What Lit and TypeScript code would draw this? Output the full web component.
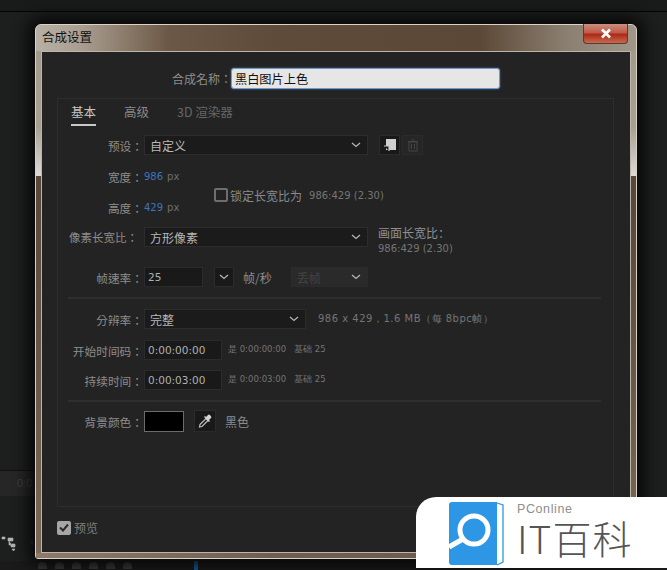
import { LitElement, html, css } from "lit";
import { customElement } from "lit/decorators.js";

const chev = html`<svg class="chev" width="10" height="6" viewBox="0 0 10 6"><path d="M1 1l4 3.5L9 1" fill="none" stroke="#b4b4b4" stroke-width="1.3"/></svg>`;

@customElement("app-root")
export class AppRoot extends LitElement {
  static styles = css`
    :host { display: block; width: 667px; height: 570px; }
    * { box-sizing: border-box; }
    .desk { position: relative; width: 667px; height: 570px; overflow: hidden; background: #1d1e1e;
      font-family: "Noto Sans CJK SC", "Noto Sans", sans-serif; font-size: 12px; color: #a8a8a8; }
    .topline { height: 12px; border-bottom: 1px solid #050505; background: #191a1a; }
    .bgpanel { position: absolute; left: 0; top: 470px; width: 35px; height: 26px; background: #262626; border-top: 1px solid #111;
      font: 11px "Liberation Sans", sans-serif; color: #3f3f3f; padding: 6px 0 0 17px; }
    .bgicons { position: absolute; left: 0; top: 535px; }
    .bgstrip { position: absolute; left: 0; top: 561px; width: 667px; height: 9px; background: #1a1a1a; display: flex; align-items: center; }
    .bgstrip i { display: block; width: 9px; height: 7px; border-radius: 5px 5px 0 0; background: #3c3c3c; margin-left: 8px; }
    .bgstrip b { display: block; width: 4px; height: 9px; background: #1f5d9c; margin-left: 62px; }
    .win { position: absolute; left: 35px; top: 24px; width: 602px; height: 535px; border-radius: 6px 6px 3px 3px;
      background: linear-gradient(90deg, #b8b0a4 0, #a89c8e 8%, #6c5846 22%, #5f4b39 40%, #5c4836 74%, #8a7e70 88%, #a09789 100%);
      box-shadow: 0 0 16px 6px #060606; border: 1px solid #d8d3ca; padding: 0 5px 5px 5px; display: flex; flex-direction: column; }
    .edge { position: absolute; width: 5px; top: 26px; height: 125px; background: linear-gradient(180deg, #a49a8c 0, #a89e92 60%, #dcdad6 100%); }
    .edgelow { position: absolute; width: 5px; top: 151px; bottom: 0; background: linear-gradient(180deg, #57473a, #7b6858); }
    .edge.l, .edgelow.l { left: 0; } .edge.r, .edgelow.r { right: 0; }
    .edgeb { position: absolute; left: 0; right: 0; bottom: 0; height: 5px; background: linear-gradient(90deg, #8d7b6a, #6f5e50 40%, #6c5b4c); }
    .titlebar { height: 26px; flex: none; display: flex; align-items: center; color: #111; font-size: 12.5px; padding: 0 0 3px 1px; position: relative; }
    .close { position: absolute; right: 8px; top: -1px; width: 45px; height: 20px; border: 1px solid #5a3a32; border-top: none;
      border-radius: 0 0 4px 4px; background: linear-gradient(180deg, #c98f80 0, #c25a48 45%, #ad2a18 55%, #c66a50 100%);
      display: flex; align-items: center; justify-content: center; }
    .client { position: relative; flex: 1; background: #232323; border: 1px solid #bdb5a9; padding: 0 16px 0 15px; display: flex; flex-direction: column; }
    .namerow { display: flex; align-items: center; height: 21px; margin-top: 16px; margin-left: 115px; }
    .namerow label { width: 59px; color: #8e8e8e; white-space: nowrap; font-family: "Noto Sans CJK TC", sans-serif; }
    .nameinput { width: 269px; height: 21px; background: #e6e6e6; border: 1px solid #6f9ac8; border-radius: 3px; color: #111;
      font-size: 12.2px; padding-left: 3px; display: flex; align-items: center; box-shadow: 0 0 2px #4c7fb5; }
    .panel { margin-top: 9px; height: 409px; border: 1px solid #2d2d2d; padding: 0 10px; display: flex; flex-direction: column; position: relative; }
    .tabs { display: flex; height: 26px; margin-top: 3px; flex: none; }
    .tab { color: #8a8a8a; font-size: 12.5px; margin-left: 28px; height: 24px; }
    .tab.on { color: #c4c4c4; margin-left: 3px; border-bottom: 2px solid #c8c8c8; width: 25px; }
    .tab.off { color: #666; }
    .row { display: flex; align-items: center; flex: none; position: relative; }
    .mt7 { margin-top: 7px; } .mt4 { margin-top: 4px; } .mt20 { margin-top: 20px; } .mt10 { margin-top: 10px; } .mt11 { margin-top: 11px; } .mt8 { margin-top: 8px; }
    .lab { width: 75px; text-align: right; color: #8c8c8c; flex: none; margin-right: 1px; font-size: 11.7px; white-space: nowrap;
      font-family: "Noto Sans CJK TC", sans-serif; }
    .lab.tight { font-size: 11.5px; padding-right: 5px; }
    .sel { height: 20px; background: #1b1b1b; border: 1px solid #2c2c2c; color: #b8b8b8; font-size: 12px; padding: 0 6px 0 5px;
      display: flex; align-items: center; justify-content: space-between; flex: none; }
    .preset { width: 224px; }
    .res { width: 162px; }
    .drop { width: 77px; margin-left: 19px; background: #2a2a2a; border-color: #2b2b2b; color: #434343; }
    .input { height: 20px; background: #191919; border: 1px solid #2b2b2b; color: #b0b0b0; display: flex; align-items: center; padding-left: 3px;
      font: 10.5px "DejaVu Sans", sans-serif; flex: none; }
    .tc { width: 78px; }
    .fps { width: 59px; }
    .ibtn { width: 21px; height: 20px; display: flex; align-items: center; justify-content: center; flex: none; }
    .ibtn.dark { background: #191919; border: 1px solid #2b2b2b; }
    .ibtn.dim { border: 1px solid #2b2b2b; background: #262626; margin-left: 2px; }
    .ibtn.narrow { width: 20px; margin-left: 11px; }
    .ibtn.tall { width: 22px; height: 22px; margin-left: 10px; }
    .ml11 { margin-left: 11px; }
    .sm { font: 10px "DejaVu Sans", sans-serif; color: #757575; white-space: nowrap; }
    .sm.wide { letter-spacing: .5px; margin-left: 12px; }
    .sm.lockv { margin-left: 7px; }
    .tiny { font: 8.5px "DejaVu Sans", sans-serif; color: #757575; white-space: nowrap; margin-left: 6px; }
    .tiny + .tiny { margin-left: 8px; }
    .blue { color: #3b75c0; font: 10px "DejaVu Sans", sans-serif; }
    .px { color: #6e6e6e; font: 10px "DejaVu Sans", sans-serif; margin-left: 4px; }
    .check { width: 14px; height: 14px; border: 2px solid #6e6e6e; border-radius: 2px; flex: none; }
    .widthblock { display: flex; height: 62px; margin-top: 6px; }
    .dims { width: 146px; display: flex; flex-direction: column; }
    .dims .row { height: 31px; }
    .lock { display: flex; align-items: center; color: #8a8a8a; font-size: 12px; padding-top: 6px; }
    .lock .check { margin-right: 2px; }
    .info { position: absolute; left: 310px; top: -1px; display: flex; flex-direction: column; gap: 3px; line-height: 14px; white-space: nowrap; }
    .infohead { font-size: 12px; color: #909090; }
    .unit { margin-left: 9px; color: #8c8c8c; font-size: 12px; }
    .rule { height: 2px; background: #2e2e2e; flex: none; margin-right: 2px; }
    .swatch { width: 40px; height: 21px; background: #000; border: 1px solid #6c6c6c; flex: none; }
    .footer { position: absolute; left: 15px; bottom: 16px; display: flex; align-items: center; gap: 3px; color: #7e7e7e; font-size: 12px; }
    .pcheck { width: 14px; height: 14px; background: #a6a6a6; border-radius: 2px; display: flex; align-items: center; justify-content: center; }
    .logo { position: absolute; left: 416px; top: 497px; width: 251px; height: 71px; background: #fff; border-radius: 20px 0 0 0; }
    .logo svg { position: absolute; left: 33px; top: 5px; }
    .logotext { position: absolute; left: 101px; top: 5px; display: flex; flex-direction: column; }
    .pc { font: 12.5px/14px "Liberation Sans", sans-serif; color: #8d8d8d; letter-spacing: .6px; }
    .it { font: 300 39px/40px "Noto Sans CJK SC", sans-serif; color: #555; white-space: nowrap; letter-spacing: 1px; margin-top: 1px; }
  `;

  render() {
    return html`<div class="desk">
      <div class="topline"></div>
      <div class="bgpanel">0:0</div>
      <svg class="bgicons" width="36" height="18" viewBox="0 0 36 18"><path d="M2 2h3v2H2zM8 3h5v3H8zM9 6v4h3M11 9h4v3h-4zM12 14h3l-1.500 2z" fill="#b4b4b4" stroke="#b4b4b4" stroke-width=".6"/><path d="M33 4v7l-3-3.500z" fill="#3a3a3a"/></svg>
      <div class="bgstrip"><i style="margin-left:38px"></i><i></i><i></i><i></i><i></i><i></i><b></b></div>
      <div class="win">
        <div class="edge l"></div><div class="edge r"></div>
        <div class="edgelow l"></div><div class="edgelow r"></div>
        <div class="edgeb"></div>
        <div class="titlebar">合成设置</div>
        <div class="close"><svg width="12" height="11" viewBox="0 0 12 11"><path d="M2 1.500l8 8M10 1.500l-8 8" stroke="#fff" stroke-width="2.600"/></svg></div>
        <div class="client">
          <div class="namerow"><label>合成名称：</label><div class="nameinput">黑白图片上色</div></div>
          <div class="panel">
            <div class="tabs"><div class="tab on">基本</div><div class="tab">高级</div><div class="tab off">3D 渲染器</div></div>
            <div class="row mt7">
              <div class="lab">预设：</div>
              <div class="sel preset">自定义${chev}</div>
              <div class="ibtn dark ml11"><svg width="14" height="14" viewBox="0 0 14 14"><path d="M3 1h10v11H3z" fill="#d0d0d0"/><path d="M1 8h5v5" fill="#191919" stroke="#c8c8c8" stroke-width="1.200"/></svg></div>
              <div class="ibtn dim"><svg width="12" height="13" viewBox="0 0 12 13"><path d="M2 3h8v9H2zM1 2.500h10M4.500 1h3M4.500 5v5M7.500 5v5" fill="none" stroke="#444"/></svg></div>
            </div>
            <div class="widthblock">
              <div class="dims">
                <div class="row"><div class="lab">宽度：</div><span class="blue">986</span><span class="px">px</span></div>
                <div class="row"><div class="lab">高度：</div><span class="blue">429</span><span class="px">px</span></div>
              </div>
              <div class="lock"><div class="check"></div>锁定长宽比为<span class="sm lockv">986:429 (2.30)</span></div>
            </div>
            <div class="row mt4">
              <div class="lab tight">像素长宽比：</div>
              <div class="sel preset">方形像素${chev}</div>
              <div class="info">
                <span class="infohead">画面长宽比：</span>
                <span class="sm">986:429 (2.30)</span>
              </div>
            </div>
            <div class="row mt20">
              <div class="lab">帧速率：</div>
              <div class="input fps">25</div>
              <div class="ibtn dark narrow">${chev}</div>
              <span class="unit">帧/秒</span>
              <div class="sel drop">丢帧${chev}</div>
            </div>
            <div class="rule mt10"></div>
            <div class="row mt10">
              <div class="lab">分辨率：</div>
              <div class="sel res">完整${chev}</div>
              <span class="sm wide">986 x 429，1.6 MB（每 8bpc帧）</span>
            </div>
            <div class="row mt11">
              <div class="lab">开始时间码：</div>
              <div class="input tc">0:00:00:00</div>
              <span class="tiny">是 0:00:00:00</span>
              <span class="tiny">基础 25</span>
            </div>
            <div class="row mt10">
              <div class="lab">持续时间：</div>
              <div class="input tc">0:00:03:00</div>
              <span class="tiny">是 0:00:03:00</span>
              <span class="tiny">基础 25</span>
            </div>
            <div class="rule mt10"></div>
            <div class="row mt8">
              <div class="lab">背景颜色：</div>
              <div class="swatch"></div>
              <div class="ibtn dark tall"><svg width="16" height="16" viewBox="0 0 16 16"><path d="M3 11.500L9 5.500l2 2-6 6-2.500.5z" fill="none" stroke="#bdbdbd" stroke-width="1.200"/><path d="M9 4l1.800-1.800a1.500 1.500 0 012.300 0l.7.7a1.500 1.500 0 010 2.300L12 7l1 1-1 1-5-5 1-1z" fill="#d4d4d4"/></svg></div>
              <span class="unit ml11">黑色</span>
            </div>
          </div>
          <div class="footer"><div class="pcheck"><svg width="10" height="9" viewBox="0 0 10 9"><path d="M1 4.500l3 3 5-6" fill="none" stroke="#2a2a2a" stroke-width="2"/></svg></div>预览</div>
        </div>
      </div>
      <div class="logo">
        <svg width="56" height="64" viewBox="0 0 56 64">
          <path d="M3 0h45v63H3a3 3 0 01-3-3V3a3 3 0 013-3z" fill="#2d97e6"/>
          <circle cx="25" cy="28" r="14" fill="none" stroke="#fff" stroke-width="5"/>
          <path d="M14 37L0 45" stroke="#fff" stroke-width="5"/>
          <path d="M48 1l6 2v57l-6 3" fill="none" stroke="#2d97e6" stroke-width="1.300"/>
        </svg>
        <div class="logotext"><div class="pc">PConline</div><div class="it">IT百科</div></div>
      </div>
    </div>`;
  }
}
